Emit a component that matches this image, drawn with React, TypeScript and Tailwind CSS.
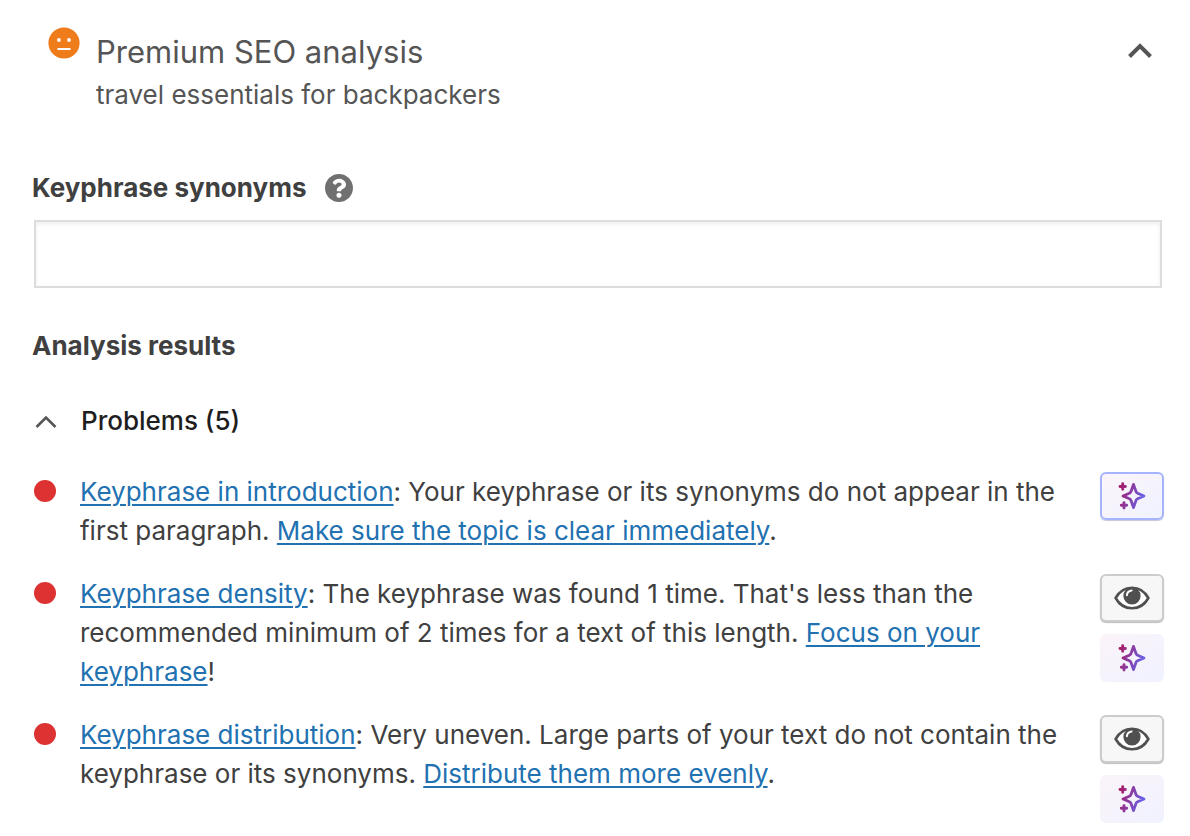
import { useId, useState } from "react";
import type { ReactNode } from "react";

function NeutralFace() {
  return (
    <svg viewBox="0 0 32 32" className="mt-[27px] size-8 shrink-0" aria-hidden="true">
      <circle cx="16" cy="16" r="15.6" fill="#ee7c1b" />
      <circle cx="10.9" cy="13" r="1.9" fill="#fff" />
      <circle cx="21" cy="13" r="1.9" fill="#fff" />
      <rect x="9.4" y="21" width="13.2" height="2" rx="0.4" fill="#fff" />
    </svg>
  );
}

function HelpIcon() {
  return (
    <svg viewBox="8 8 496 496" className="size-7" fill="#707070" aria-hidden="true">
      <path d="M504 256c0 136.997-111.043 248-248 248S8 392.997 8 256C8 119.083 119.043 8 256 8s248 111.083 248 248zM262.655 90c-54.497 0-89.255 22.957-116.549 63.758-3.536 5.286-2.353 12.415 2.715 16.258l34.699 26.31c5.205 3.947 12.621 3.008 16.665-2.122 17.864-22.658 30.113-35.797 57.303-35.797 20.429 0 45.698 13.148 45.698 32.958 0 14.976-12.363 22.667-32.534 33.976C247.128 238.528 216 254.941 216 296v4c0 6.627 5.373 12 12 12h56c6.627 0 12-5.373 12-12v-1.333c0-28.462 83.186-29.647 83.186-106.667 0-58.002-60.165-102-116.531-102zM256 338c-25.365 0-46 20.635-46 46 0 25.364 20.635 46 46 46s46-20.636 46-46c0-25.365-20.635-46-46-46z" />
    </svg>
  );
}

function EyeIcon() {
  return (
    <svg viewBox="0 0 36 26" className="h-[26px] w-9" aria-hidden="true">
      <path
        d="M1.6 13C5.4 6.2 11 2.7 18 2.7S30.6 6.2 34.4 13C30.6 19.8 25 23.3 18 23.3S5.4 19.8 1.6 13Z"
        fill="#fff"
        stroke="#505050"
        strokeWidth="2.6"
        strokeLinejoin="round"
      />
      <circle cx="18" cy="10.9" r="8.6" fill="#505050" />
      <path d="M12.9 10.2c.2-2.6 1.900-4.300 4.700-4.700" fill="none" stroke="#fff" strokeWidth="2" strokeLinecap="round" />
    </svg>
  );
}

function SparklesIcon() {
  const gradient = useId();
  return (
    <svg viewBox="0 0 28 30" className="h-[30px] w-7" aria-hidden="true">
      <defs>
        <linearGradient id={gradient} gradientUnits="userSpaceOnUse" x1="1" y1="10" x2="27" y2="18">
          <stop offset="0" stopColor="#a61e69" />
          <stop offset="1" stopColor="#6366f1" />
        </linearGradient>
      </defs>
      <g fill="none" stroke={`url(#${gradient})`} strokeLinecap="round" strokeLinejoin="round">
        <path
          strokeWidth="2.8"
          d="M15.5 3.4l2.500 7.100a3 3 0 0 0 1.600 1.700l6.400 2.800-6.400 2.800a3 3 0 0 0-1.600 1.700l-2.500 7.100-2.500-7.100a3 3 0 0 0-1.600-1.700L5 15l6.400-2.800a3 3 0 0 0 1.600-1.700z"
        />
        <path strokeWidth="2.900" d="M4.700 2.800v5.400M2 5.500h5.400M6 21.600V27M3.300 24.300h5.400" />
      </g>
    </svg>
  );
}

function HighlightButton() {
  return (
    <button
      type="button"
      aria-label="Highlight this result in the text"
      className="flex h-12 w-16 items-center justify-center rounded-[6px] border-2 border-[#cccccc] bg-[#f7f7f7] shadow-[0_1px_1px_#bbbbbb]"
    >
      <EyeIcon />
    </button>
  );
}

function OptimizeButton({ outlined = false }: { outlined?: boolean }) {
  return (
    <button
      type="button"
      aria-label="Optimize with AI"
      className={
        outlined
          ? "flex h-12 w-16 items-center justify-center rounded-[6px] border-2 border-[#a5b4fc] bg-linear-to-br from-[#fbf5fa] to-[#f0f2ff] shadow-[0_1px_1px_#c5c8d8]"
          : "flex h-12 w-16 items-center justify-center rounded-[6px] bg-linear-to-br from-[#fbf4f9] to-[#f0f2ff]"
      }
    >
      <SparklesIcon />
    </button>
  );
}

function HelpLink({ children }: { children: ReactNode }) {
  return (
    <a href="#" className="text-[#2271b1] underline decoration-2 underline-offset-3">
      {children}
    </a>
  );
}

function Result({ children, actions }: { children: ReactNode; actions: ReactNode }) {
  return (
    <li className="flex items-start">
      <span className="mt-2 mr-6 ml-[2px] size-[22px] shrink-0 rounded-full bg-[#dc3232]" />
      <p className="min-w-0 flex-1 text-[26px] leading-[39px]">{children}</p>
      <div className="ml-6 flex shrink-0 flex-col gap-3">{actions}</div>
    </li>
  );
}

export default function App() {
  const [synonyms, setSynonyms] = useState("");
  const [open, setOpen] = useState(true);
  const [problemsOpen, setProblemsOpen] = useState(true);

  return (
    <main className="bg-white pr-[26px] pb-3 pl-8 font-[Inter,'Liberation_Sans',sans-serif] text-[#404040]">
      <button
        type="button"
        aria-expanded={open}
        onClick={() => setOpen(!open)}
        className="flex w-full items-start pr-2 pl-4 text-left text-[#555555]"
      >
        <NeutralFace />
        <span className="ml-4 flex-1 pt-8">
          <span className="block text-[31px] leading-10">Premium SEO analysis</span>
          <span className="mt-[3px] block text-[26px] leading-[39px]">travel essentials for backpackers</span>
        </span>
        <svg viewBox="0 0 32 32" className="mt-[35px] size-8" fill="none" stroke="#555" strokeWidth="4" aria-hidden="true">
          <path d="M5.5 21.5L16 11l10.500 10.500" />
        </svg>
      </button>

      {open && (
        <>
          <div className="mt-[54px] flex h-10 items-center gap-[18px]">
            <label htmlFor="synonyms" className="text-[26px] leading-10 font-bold">
              Keyphrase synonyms
            </label>
            <button type="button" aria-label="Learn more about keyphrase synonyms">
              <HelpIcon />
            </button>
          </div>
          <div className="mt-3 px-[2px]">
            <input
              id="synonyms"
              type="text"
              value={synonyms}
              onChange={(e) => setSynonyms(e.target.value)}
              className="block h-[68px] w-full border-2 border-[#dddddd] bg-white px-4 text-[26px] shadow-[inset_0_2px_4px_rgba(0,0,0,0.07)]"
            />
          </div>

          <h2 className="mt-[38px] text-[26px] leading-10 font-bold">Analysis results</h2>

          <h3 className="mt-[35px]">
            <button
              type="button"
              aria-expanded={problemsOpen}
              onClick={() => setProblemsOpen(!problemsOpen)}
              className="flex items-center gap-6 pl-px text-[26px] leading-[39px] font-medium text-[#1e1e1e]"
            >
              <svg viewBox="0 0 24 24" className="size-6" fill="none" stroke="#555" strokeWidth="2.6" aria-hidden="true">
                <path d="M3.5 18L13 8.500l9.500 9.500" />
              </svg>
              Problems (5)
            </button>
          </h3>

          {problemsOpen && (
            <ul className="mt-8 flex flex-col gap-6">
              <Result actions={<OptimizeButton outlined />}>
                <HelpLink>Keyphrase in introduction</HelpLink>: Your keyphrase or its synonyms do not appear in the first
                paragraph. <HelpLink>Make sure the topic is clear immediately</HelpLink>.
              </Result>
              <Result
                actions={
                  <>
                    <HighlightButton />
                    <OptimizeButton />
                  </>
                }
              >
                <HelpLink>Keyphrase density</HelpLink>: The keyphrase was found 1 time. That's less than the recommended
                minimum of 2 times for a text of this length. <HelpLink>Focus on your keyphrase</HelpLink>!
              </Result>
              <Result
                actions={
                  <>
                    <HighlightButton />
                    <OptimizeButton />
                  </>
                }
              >
                <HelpLink>Keyphrase distribution</HelpLink>: Very uneven. Large parts of your text do not contain the
                keyphrase or its synonyms. <HelpLink>Distribute them more evenly</HelpLink>.
              </Result>
            </ul>
          )}
        </>
      )}
    </main>
  );
}
